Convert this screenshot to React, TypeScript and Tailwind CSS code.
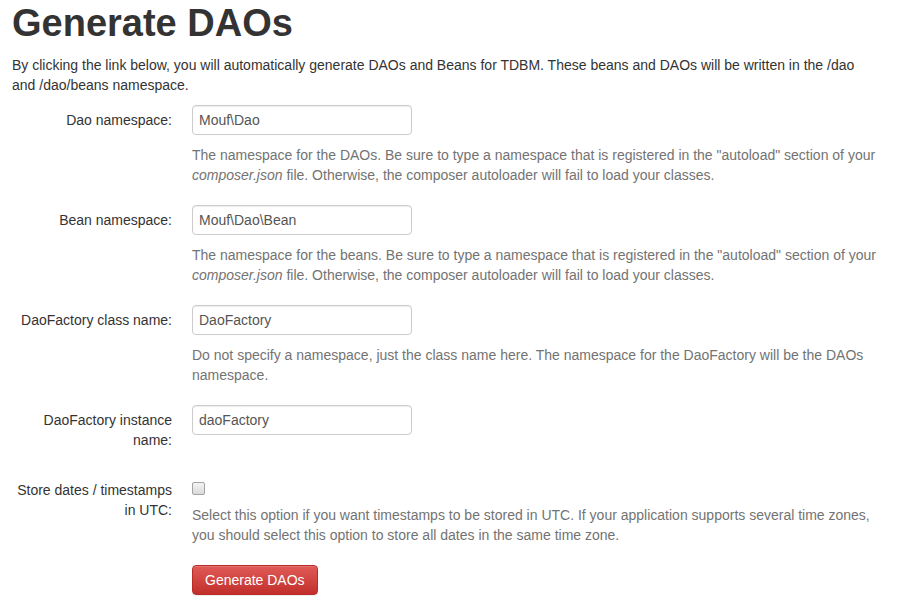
import React from 'react';

interface FieldProps {
  label: string;
  value: string;
  help?: React.ReactNode;
}

const Field: React.FC<FieldProps> = ({ label, value, help }) => (
  <div className="flex gap-5">
    <label className="w-[160px] shrink-0 py-[5px] text-right">{label}</label>
    <div className="flex-1">
      <input
        type="text"
        defaultValue={value}
        className="block h-[30px] w-[220px] rounded-[4px] border border-[#ccc] bg-white px-[6px] text-[14px] text-[#555] shadow-[inset_0_1px_1px_rgba(0,0,0,0.075)] outline-none"
      />
      {help && <p className="mt-[10px] text-[#737373]">{help}</p>}
    </div>
  </div>
);

const autoloadHelp = (what: string) => (
  <>
    The namespace for the {what}. Be sure to type a namespace that is registered in the "autoload" section of your{' '}
    <em>composer.json</em> file. Otherwise, the composer autoloader will fail to load your classes.
  </>
);

export default function App() {
  return (
    <div className="min-h-screen bg-white pl-3 pr-[18px] font-['Liberation_Sans',Arial,sans-serif] text-[14px] leading-5 text-[#333]">
      <h1 className="pt-[3px] text-[38px] font-bold leading-[1.1]">Generate DAOs</h1>
      <p className="mt-[10px]">
        By clicking the link below, you will automatically generate DAOs and Beans for TDBM. These beans and DAOs will be written in the /dao
        and /dao/beans namespace.
      </p>

      <form className="mt-[10px] flex flex-col gap-5">
        <Field label="Dao namespace:" value="Mouf\Dao" help={autoloadHelp('DAOs')} />
        <Field label="Bean namespace:" value="Mouf\Dao\Bean" help={autoloadHelp('beans')} />
        <Field
          label="DaoFactory class name:"
          value="DaoFactory"
          help="Do not specify a namespace, just the class name here. The namespace for the DaoFactory will be the DAOs namespace."
        />
        <Field label="DaoFactory instance name:" value="daoFactory" />

        <div className="flex gap-5">
          <label className="w-[160px] shrink-0 py-[5px] text-right">Store dates / timestamps in UTC:</label>
          <div className="flex-1">
            <div className="pt-[7px]">
              <input
                type="checkbox"
                className="block h-[13px] w-[13px] appearance-none rounded-[2px] border border-[#a3a3a3] bg-gradient-to-b from-[#f5f5f5] to-[#dadada]"
              />
            </div>
            <p className="mt-[10px] text-[#737373]">
              Select this option if you want timestamps to be stored in UTC. If your application supports several time zones,
              you should select this option to store all dates in the same time zone.
            </p>
          </div>
        </div>

        <div className="flex gap-5">
          <div className="w-[160px] shrink-0" />
          <div className="flex-1">
            <button
              type="button"
              className="rounded-[4px] border border-[#b92c28] bg-gradient-to-b from-[#e05a56] to-[#c12e2a] px-3 py-[4px] text-[14px] text-white shadow-[inset_0_1px_0_rgba(255,255,255,0.15),0_1px_1px_rgba(0,0,0,0.075)]"
            >
              Generate DAOs
            </button>
          </div>
        </div>
      </form>
    </div>
  );
}
